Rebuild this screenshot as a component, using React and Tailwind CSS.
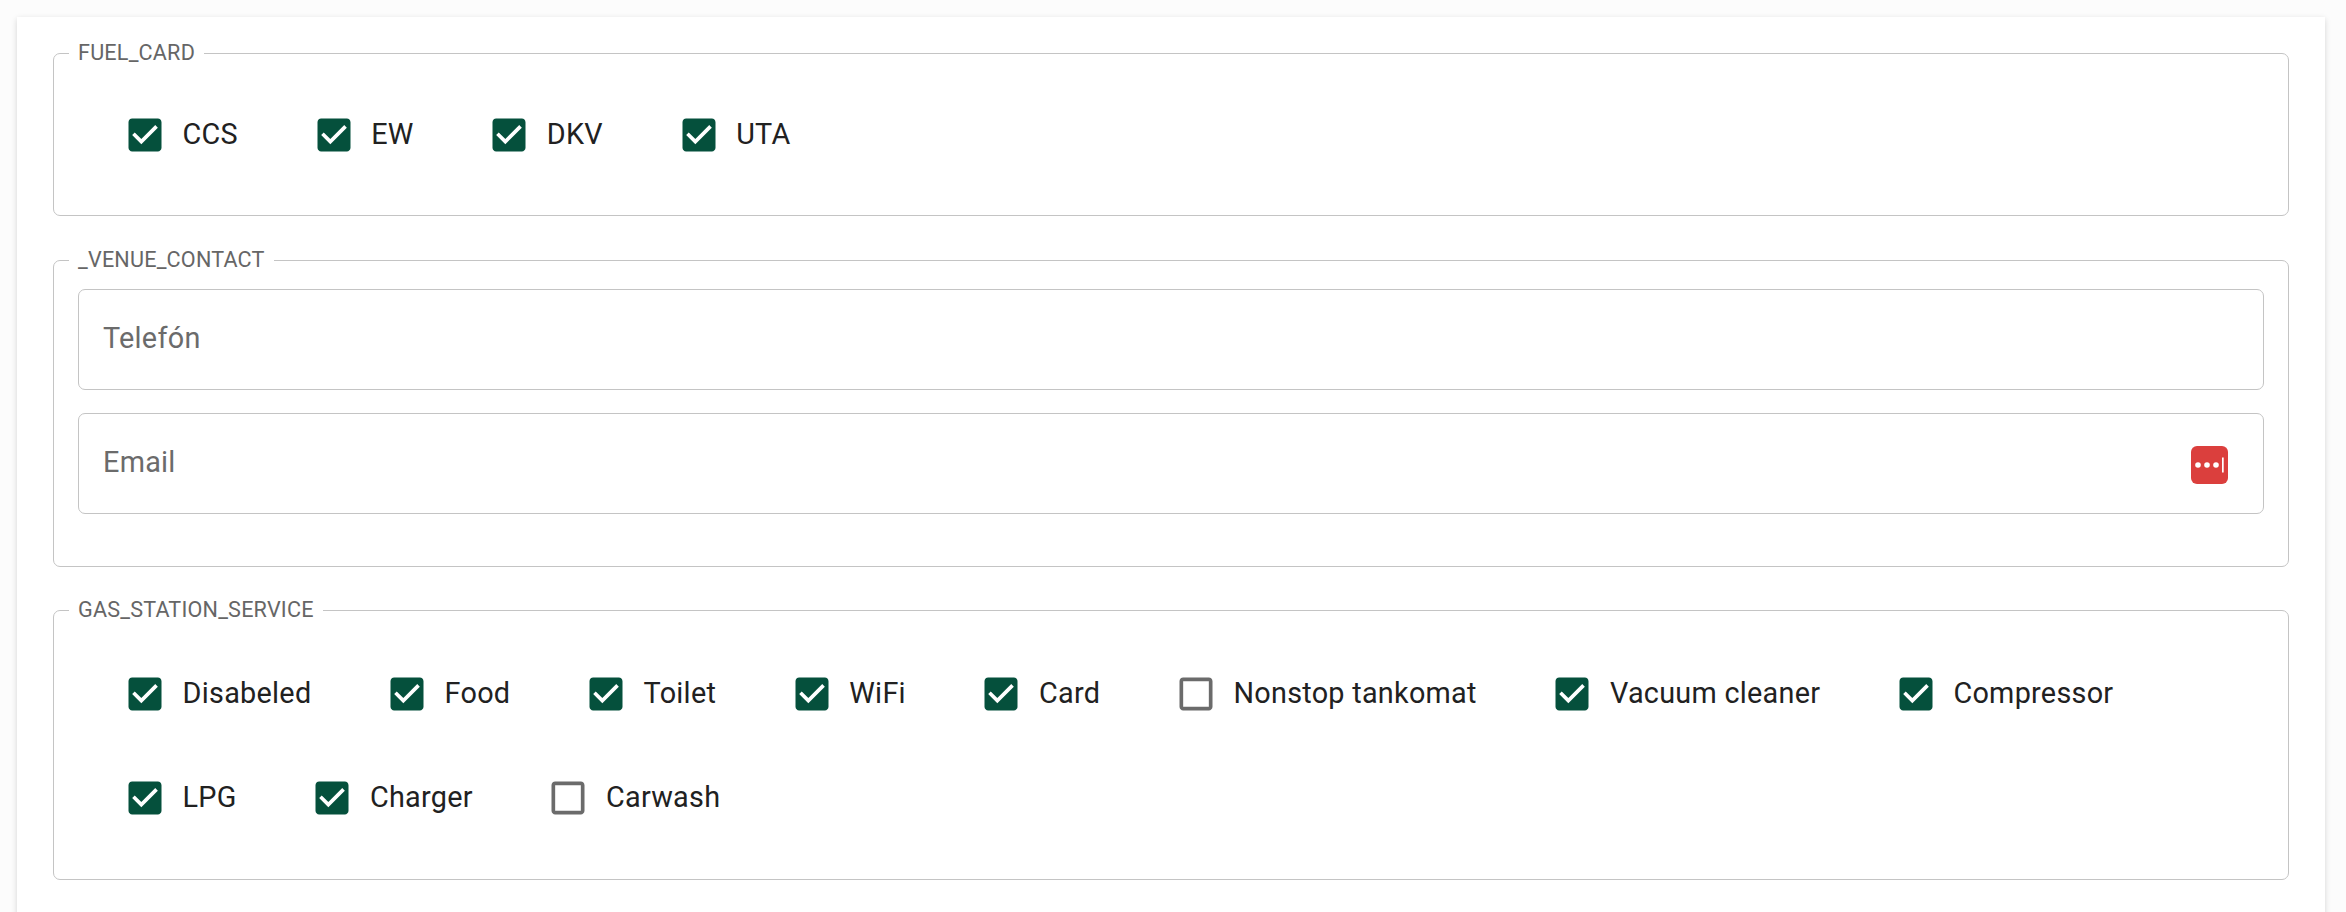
const CHECK = "M19 3H5c-1.11 0-2 .9-2 2v14c0 1.1.89 2 2 2h14c1.11 0 2-.9 2-2V5c0-1.1-.89-2-2-2zm-9 14l-5-5 1.41-1.41L10 14.17l7.59-7.59L19 8l-9 9z";
const EMPTY = "M19 5v14H5V5h14m0-2H5c-1.1 0-2 .9-2 2v14c0 1.1.9 2 2 2h14c1.1 0 2-.9 2-2V5c0-1.1-.9-2-2-2z";

function Check({ label, checked = true }) {
  return (
    <label className="flex items-center mr-[57.6px]">
      <span className="pl-[16px] pr-[15.6px] py-[16px] flex">
        <svg viewBox="0 0 24 24" className={`w-[44px] h-[44px] ${checked ? "text-[#05503c]" : "text-[#6b6b6b]"}`} fill="currentColor">
          <path d={checked ? CHECK : EMPTY} />
        </svg>
      </span>
      <span className="text-[28.8px] leading-[1.5] tracking-[0.27px] text-[#212121] whitespace-nowrap">{label}</span>
    </label>
  );
}

function Group({ title, className, children }) {
  return (
    <fieldset className={`border border-[#c4c4c4] rounded-[7px] px-[24px] min-w-0 ${className}`}>
      <legend className="ml-[-9px] px-[9px] text-[21.6px] leading-[24px] tracking-[0.2px] text-[#666666] whitespace-nowrap">{title}</legend>
      {children}
    </fieldset>
  );
}

function Field({ label, icon }) {
  return (
    <div className="h-[101px] border border-[#c4c4c4] rounded-[7px] flex items-center justify-between pl-[24px] pr-[35px]">
      <span className="text-[28.8px] tracking-[0.27px] text-[#6b6b6b] pb-[2px]">{label}</span>
      {icon}
    </div>
  );
}

function LastPass() {
  return (
    <svg viewBox="0 0 37 38" className="w-[37px] h-[38px] mt-[2px]">
      <rect width="37" height="38" rx="6" fill="#db3f3d" />
      <circle cx="7" cy="19" r="2.8" fill="#fff" />
      <circle cx="16" cy="19" r="2.8" fill="#fff" />
      <circle cx="25" cy="19" r="2.8" fill="#fff" />
      <rect x="31" y="11.5" width="1.7" height="15" fill="#fff" />
    </svg>
  );
}

export default function App() {
  return (
    <div className="h-[912px] overflow-hidden bg-[#fcfcfc] pt-[17px] pl-[17px] pr-[21px] font-['Roboto',sans-serif]">
      <div className="h-[960px] bg-white shadow-[0_2px_6px_rgba(0,0,0,0.16)] pl-[36px] pr-[36px] flex flex-col">
        <Group title="FUEL_CARD" className="mt-[24px] h-[175px]">
          <div className="flex pl-[29px] mt-[32px]"><Check label="CCS" /><Check label="EW" /><Check label="DKV" /><Check label="UTA" /></div>
        </Group>
        <Group title="_VENUE_CONTACT" className="mt-[32px] h-[319px]">
          <div className="flex flex-col gap-[23px] mt-[17px]">
            <Field label="Telefón" />
            <Field label="Email" icon={<LastPass />} />
          </div>
        </Group>
        <Group title="GAS_STATION_SERVICE" className="mt-[31px] h-[282px]">
          <div className="flex flex-col pl-[29px] mt-[34px] gap-[28px]">
            <div className="flex">
              <Check label="Disabeled" /><Check label="Food" /><Check label="Toilet" /><Check label="WiFi" /><Check label="Card" /><Check label="Nonstop tankomat" checked={false} /><Check label="Vacuum cleaner" /><Check label="Compressor" />
            </div>
            <div className="flex">
              <Check label="LPG" /><Check label="Charger" /><Check label="Carwash" checked={false} />
            </div>
          </div>
        </Group>
      </div>
    </div>
  );
}
